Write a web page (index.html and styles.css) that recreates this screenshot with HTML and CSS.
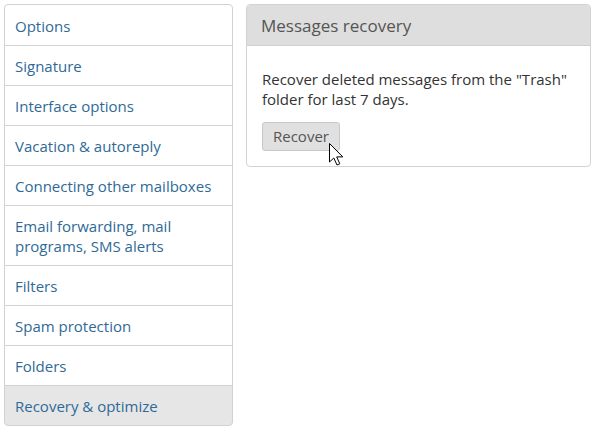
FILE: index.html
```html
<!DOCTYPE html>
<html>
	<head>
		<link rel="stylesheet" href="styles.css">
	</head>
	<body>
		<div class="page">
			<div class="menu">
				<a class="menu_item" href="#">Options</a>
				<a class="menu_item" href="#">Signature</a>
				<a class="menu_item" href="#">Interface options</a>
				<a class="menu_item" href="#">Vacation &amp; autoreply</a>
				<a class="menu_item" href="#">Connecting other mailboxes</a>
				<a class="menu_item" href="#">Email forwarding, mail programs, SMS alerts</a>
				<a class="menu_item" href="#">Filters</a>
				<a class="menu_item" href="#">Spam protection</a>
				<a class="menu_item" href="#">Folders</a>
				<a class="menu_item active" href="#">Recovery &amp; optimize</a>
			</div>

			<div class="panel">
				<div class="panel_head">Messages recovery</div>
				<div class="panel_body">
					<p>Recover deleted messages from the "Trash" folder for last 7 days.</p>
					<div class="btn_wrap">
						<button class="btn">Recover</button>
						<svg class="cursor" width="18" height="25" viewBox="0 0 18 25">
							<path d="M1.5 1.5 L1.5 20 L5.8 16 L9 23 L11.8 21.8 L8.7 14.9 L14.8 14.9 Z" fill="#fff" stroke="#000" stroke-width="1" stroke-linejoin="miter"/>
						</svg>
					</div>
				</div>
			</div>
		</div>
	</body>
</html>
```

FILE: styles.css
```css
body {
	margin: 4px;
	font-family: "Open Sans", "Liberation Sans", sans-serif;
	font-size: 15px;
	color: #333;
	background-color: #fff;
}

.page {
	display: flex;
	align-items: flex-start;
	gap: 13px;
}

.menu {
	width: 229px;
	display: flex;
	flex-direction: column;
}

.menu_item {
	display: block;
	padding: 10px 10px 9px 10px;
	line-height: 20px;
	border: 1px solid #d2d2d2;
	margin-bottom: -1px;
	color: #2f6a96;
	text-decoration: none;
	background-color: #fff;
}

.menu_item:first-child {
	padding-top: 11px;
	border-radius: 4px 4px 0 0;
}

.menu_item:last-child {
	border-radius: 0 0 4px 4px;
	margin-bottom: 0;
}

.menu_item.active {
	background-color: #e6e6e6;
}

.panel {
	width: 345px;
	border: 1px solid #d2d2d2;
	border-radius: 4px;
	box-sizing: border-box;
	overflow: hidden;
}

.panel_head {
	background-color: #dedede;
	border-bottom: 1px solid #cfcfcf;
	padding: 10px 14px 9px 14px;
	line-height: 21px;
	font-size: 17px;
	color: #555;
}

.panel_body {
	padding: 23px 15px 15px 15px;
}

.panel_body p {
	margin: 0 0 13px 0;
	line-height: 20px;
}

.btn_wrap {
	position: relative;
	display: inline-block;
	vertical-align: top;
}

.btn {
	display: block;
	font-family: inherit;
	font-size: 15px;
	color: #555;
	background-color: #e0e0e0;
	border: 1px solid #c8c8c8;
	border-radius: 3px;
	padding: 4px 10px;
	line-height: 19px;
}

.cursor {
	position: absolute;
	left: 66px;
	top: 20px;
}
```
